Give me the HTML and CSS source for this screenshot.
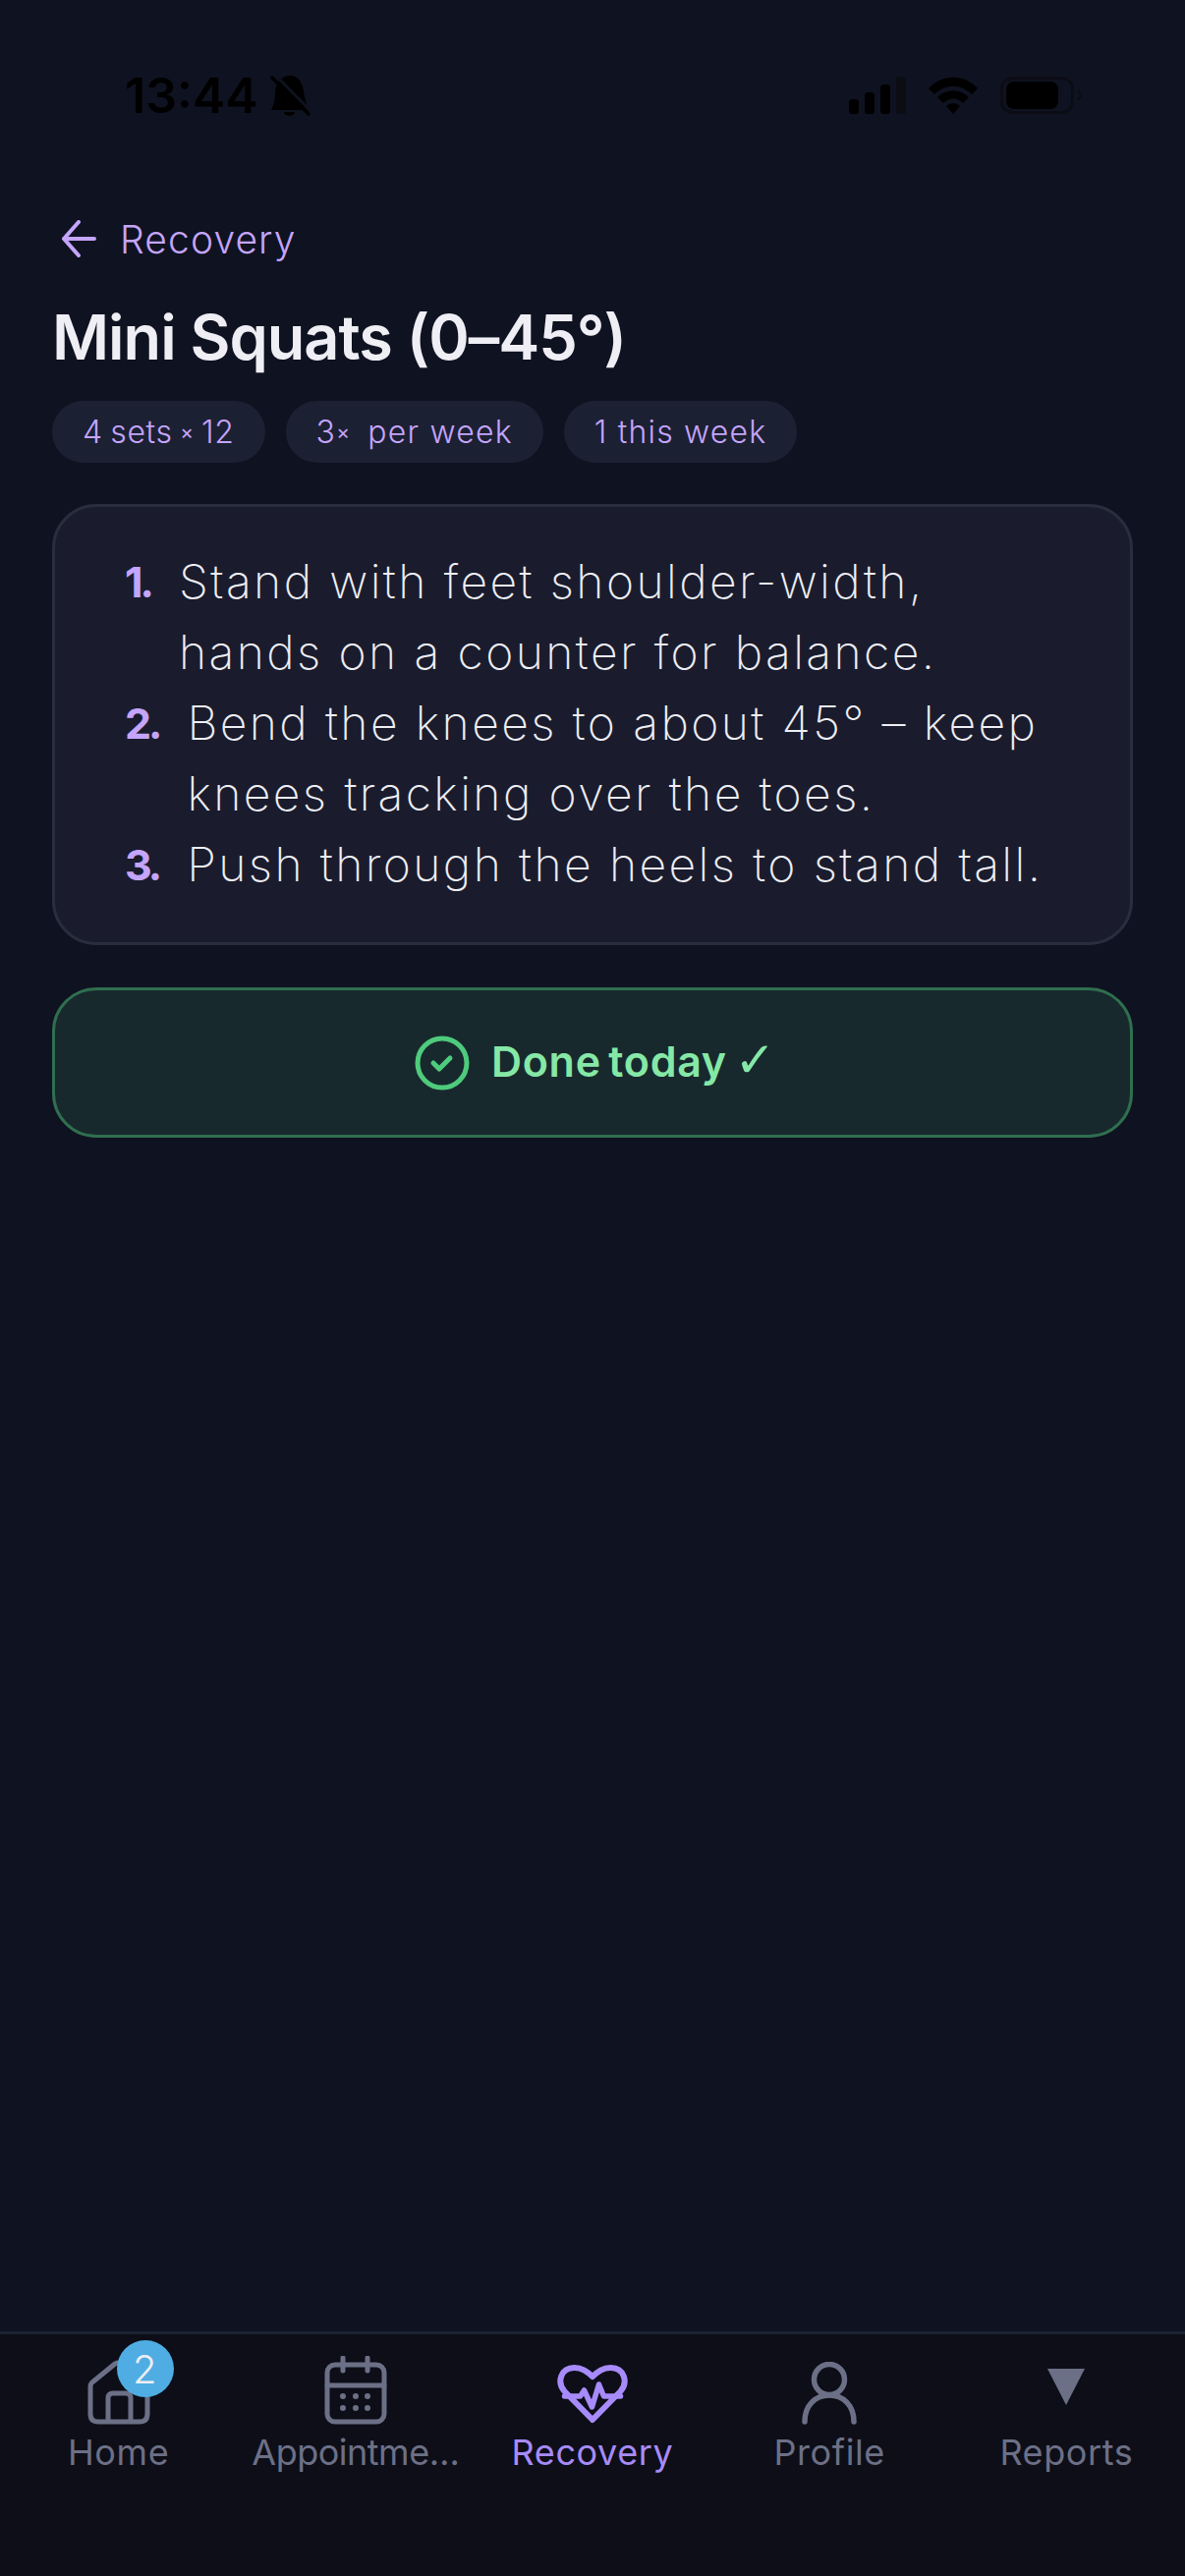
FILE: index.html
```html
<!DOCTYPE html>
<html lang="en">
<head>
    <meta charset="UTF-8">
    <meta name="viewport" content="width=device-width, initial-scale=1.0">
    <title>Mini Squats</title>
    <link rel="stylesheet" href="styles.css">
</head>
<body>
    <div class="status-bar">
        <div class="status-left">
            <span class="clock">13:44</span>
            <svg class="bell" width="55" height="55" viewBox="0 0 55 55">
                <path d="M25 7C33 6 39 13 40 23C41 31 43 36 45 42H7C10 36 11 31 11 23C12 14 17 8 25 7Z" fill="#000"/>
                <path d="M20 44H31C31 49 20 49 20 44Z" fill="#000"/>
                <path d="M12 7L47 43" stroke="#0f1220" stroke-width="3"/>
                <path d="M8 9L45 46" stroke="#000" stroke-width="3.5" stroke-linecap="round"/>
            </svg>
        </div>
        <div class="status-right">
            <svg width="58" height="38" viewBox="0 0 58 38">
                <rect x="0" y="23" width="10" height="15" rx="3.5" fill="#000"/>
                <rect x="16" y="16" width="10" height="22" rx="3.5" fill="#000"/>
                <rect x="32" y="8" width="10" height="30" rx="3.5" fill="#000"/>
                <rect x="48" y="0" width="10" height="38" rx="3.5" fill="#0b0c14"/>
            </svg>
            <svg width="50" height="38" viewBox="0 0 50 38">
                <path d="M0 12C14 -3 36 -3 50 12L44 18C33 7 17 7 6 18Z" fill="#000"/>
                <path d="M9 21C18 12 32 12 41 21L35 27C29 21 21 21 15 27Z" fill="#000"/>
                <path d="M18 30C22 26 28 26 32 30L25 38Z" fill="#000"/>
            </svg>
            <svg width="83" height="38" viewBox="0 0 83 38">
                <rect x="1.5" y="1.5" width="72" height="35" rx="11" fill="none" stroke="#0b0c14" stroke-width="3"/>
                <rect x="6" y="5" width="53" height="28" rx="8" fill="#000"/>
                <path d="M79 14L82 19L79 24" fill="none" stroke="#0b0c14" stroke-width="2"/>
            </svg>
        </div>
    </div>

    <main class="content">
        <a class="back-link" href="#">
            <svg width="38" height="38" viewBox="0 0 38 38" fill="none" stroke="#c4a5fb" stroke-width="4" stroke-linecap="round" stroke-linejoin="round">
                <path d="M34 19H3M18 2L3 19L18 36"/>
            </svg>
            <span>Recovery</span>
        </a>
        <h1 class="title">Mini Squats (0–45°)</h1>
        <div class="chips">
            <span class="chip chip-short">4 sets <span class="times">×</span> 12</span>
            <span class="chip">3<span class="times">×</span> per week</span>
            <span class="chip">1 this week</span>
        </div>

        <ol class="steps">
            <li class="step"><b class="step-num">1.</b><span>Stand with feet shoulder-width,<br>hands on a counter for balance.</span></li>
            <li class="step"><b class="step-num">2.</b><span>Bend the knees to about 45° – keep<br>knees tracking over the toes.</span></li>
            <li class="step"><b class="step-num">3.</b><span>Push through the heels to stand tall.</span></li>
        </ol>

        <button class="done-btn" type="button">
            <svg width="56" height="56" viewBox="0 0 56 56" fill="none" stroke="#4ecb7c" stroke-linecap="round" stroke-linejoin="round">
                <circle cx="28" cy="28" r="25" stroke-width="5"/>
                <path d="M19 28L25 34L36 23" stroke-width="5"/>
            </svg>
            <span class="done-text">Done today <span class="done-tick">✓</span></span>
        </button>
    </main>

    <nav class="tab-bar">
        <a class="tab" href="#">
            <span class="tab-icon">
                <svg width="64" height="66" viewBox="0 0 64 66" fill="none" stroke="#6c7086" stroke-width="5" stroke-linejoin="round">
                    <path d="M3 27Q3 24 6 22L28 4Q31 2 34 4L58 22Q61 24 61 27V55Q61 63 53 63H11Q3 63 3 55Z"/>
                    <path d="M21 63V39Q21 34 26 34H39Q44 34 44 39V63"/>
                </svg>
                <span class="badge">2</span>
            </span>
            <span class="tab-label">Home</span>
        </a>
        <a class="tab" href="#">
            <span class="tab-icon">
                <svg width="64" height="70" viewBox="0 0 64 70" fill="none" stroke="#6c7086" stroke-width="5" stroke-linecap="round">
                    <rect x="3" y="9" width="58" height="58" rx="8"/>
                    <path d="M3 30H61M19 2V15M44 2V15"/>
                    <g fill="#6c7086" stroke="none">
                        <circle cx="19" cy="41" r="3"/><circle cx="32" cy="41" r="3"/><circle cx="44" cy="41" r="3"/>
                        <circle cx="19" cy="53" r="3"/><circle cx="32" cy="53" r="3"/><circle cx="44" cy="53" r="3"/>
                    </g>
                </svg>
            </span>
            <span class="tab-label tab-label-long">Appointme…</span>
        </a>
        <a class="tab tab-active" href="#">
            <span class="tab-icon">
                <svg width="72" height="62" viewBox="11.5 9 72 62" fill="none" stroke="#a78bfa" stroke-width="6" stroke-linecap="round" stroke-linejoin="round">
                    <path d="M47.5 66L19 37C11 28 15 13 29 13C37 13 42 17 47.5 22C53 17 58 13 66 13C80 13 84 28 76 37Z"/>
                    <path d="M19 42H35L39 36L47 53L54 30L59 42H76" stroke-width="5.5"/>
                </svg>
            </span>
            <span class="tab-label">Recovery</span>
        </a>
        <a class="tab" href="#">
            <span class="tab-icon">
                <svg width="56" height="64" viewBox="0 0 56 64" fill="none" stroke="#6c7086" stroke-width="5.5" stroke-linecap="round">
                    <circle cx="28" cy="18" r="15.5"/>
                    <path d="M3 61C3 44 14 34 28 34C42 34 53 44 53 61"/>
                </svg>
            </span>
            <span class="tab-label">Profile</span>
        </a>
        <a class="tab" href="#">
            <span class="tab-icon">
                <svg class="triangle" width="38" height="37" viewBox="0 0 38 37"><path d="M0 0H38L19 37Z" fill="#6c7086"/></svg>
            </span>
            <span class="tab-label">Reports</span>
        </a>
    </nav>
</body>
</html>
```

FILE: styles.css
```css
/* Dark recovery screen */
* {
    box-sizing: border-box;
}
body {
    font-family: "Inter", "Noto Sans", sans-serif;
    margin: 0;
    width: 1206px;
    height: 2622px;
    display: flex;
    flex-direction: column;
    background-color: #0f1220;
    color: #eeeef4;
    overflow: hidden;
}
a {
    text-decoration: none;
    color: inherit;
}

/* Status bar */
.status-bar {
    height: 120px;
    padding: 78px 105px 0 127px;
    display: flex;
    justify-content: space-between;
    align-items: flex-start;
    flex-shrink: 0;
}
.status-left {
    display: flex;
    align-items: center;
    height: 38px;
}
.clock {
    font-size: 50px;
    font-weight: 600;
    line-height: 38px;
    color: #000;
}
.bell {
    margin-left: 6px;
}
.status-right {
    display: flex;
    gap: 23px;
}

/* Main content */
.content {
    flex: 1;
    padding: 101px 53px 0;
}
.back-link {
    display: flex;
    align-items: center;
    gap: 22px;
    padding-left: 9px;
    height: 44px;
    font-size: 39px;
    font-weight: 300;
    letter-spacing: 1.1px;
    color: #c4a5fb;
}
.title {
    margin: 38px 0 0;
    font-size: 63px;
    line-height: 80px;
    font-weight: 600;
    letter-spacing: -1px;
}
.chips {
    display: flex;
    gap: 21px;
    margin-top: 25px;
}
.chip {
    height: 63px;
    padding: 0 31px;
    display: flex;
    align-items: center;
    white-space: pre;
    border-radius: 32px;
    background-color: #1c2033;
    color: #c4a5fb;
    font-size: 32px;
    font-weight: 300;
    letter-spacing: 1.2px;
}
.chip-short {
    letter-spacing: 0.6px;
    word-spacing: -2px;
}
.times {
    font-size: 0.65em;
    font-weight: 400;
    margin-right: 7px;
}
.chip-short .times {
    margin-right: 0;
}
.steps {
    list-style: none;
    margin: 42px 0 0;
    height: 449px;
    padding: 40px 30px 0 71px;
    background-color: #1a1c2d;
    border: 3px solid #2a2d3e;
    border-radius: 45px;
}
.step {
    display: flex;
    gap: 28px;
    font-size: 48px;
    line-height: 72px;
    font-weight: 200;
    letter-spacing: 2.4px;
    white-space: nowrap;
}
.step-num {
    font-weight: 700;
    font-size: 43px;
    color: #c4a5fb;
    letter-spacing: -3px;
}
.done-btn {
    width: 100%;
    height: 153px;
    margin-top: 43px;
    padding: 0 0 0 6px;
    display: flex;
    align-items: center;
    justify-content: center;
    gap: 22px;
    background-color: #18292e;
    border: 3px solid #2f6f4f;
    border-radius: 45px;
    color: #86e8a6;
    font-family: inherit;
    font-size: 43px;
    font-weight: 600;
    letter-spacing: 0.7px;
}
.done-text {
    margin-top: -4px;
    word-spacing: -4px;
}
.done-tick {
    font-family: "DejaVu Sans", sans-serif;
    font-size: 50px;
    font-weight: 400;
    line-height: 40px;
}

/* Bottom tabs */
.tab-bar {
    height: 249px;
    flex-shrink: 0;
    display: grid;
    grid-template-columns: repeat(5, 1fr);
    background-color: #0d0e18;
    border-top: 3px solid #1b2230;
    padding-top: 20px;
}
.tab {
    display: flex;
    flex-direction: column;
    align-items: center;
    color: #6c7086;
    font-size: 36px;
    letter-spacing: 0.6px;
}
.tab-active {
    color: #a78bfa;
}
.tab-icon {
    position: relative;
    height: 72px;
    display: flex;
    align-items: flex-end;
}
.triangle {
    margin-bottom: 20px;
}
.badge {
    position: absolute;
    top: -14px;
    left: 30px;
    width: 58px;
    height: 58px;
    display: flex;
    align-items: center;
    justify-content: center;
    border-radius: 50%;
    background-color: #4fade3;
    color: #eeeef4;
    font-size: 40px;
    font-weight: 300;
}
.tab-label {
    margin-top: 6px;
    line-height: 44px;
    white-space: nowrap;
}
.tab-label-long {
    letter-spacing: -0.5px;
}
```
